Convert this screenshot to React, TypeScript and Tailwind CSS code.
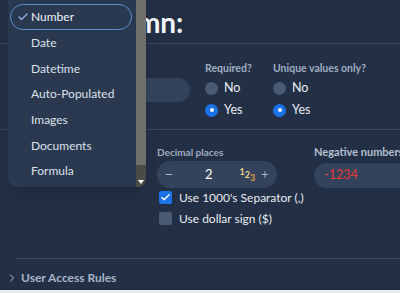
import { Check, ChevronRight, Minus, Plus } from 'lucide-react';

const types = ['Number', 'Date', 'Datetime', 'Auto-Populated', 'Images', 'Documents', 'Formula'];

function Radio({ checked, label }: { checked?: boolean; label: string }) {
  return (
    <div className="flex items-center gap-[6px] h-[22px]">
      {checked ? (
        <span className="w-[13px] h-[13px] rounded-full bg-[#1a73e8] flex items-center justify-center">
          <span className="w-[4px] h-[4px] rounded-full bg-white" />
        </span>
      ) : (
        <span className="w-[13px] h-[13px] rounded-full bg-[#4a5a72]" />
      )}
      <span className="text-[12.5px] text-[#e8edf3]">{label}</span>
    </div>
  );
}

function Checkbox({ checked, label }: { checked?: boolean; label: string }) {
  return (
    <div className="flex items-center gap-[7px] h-[21px]">
      {checked ? (
        <span className="w-[13px] h-[13px] rounded-[2px] bg-[#1a73e8] flex items-center justify-center">
          <Check size={11} strokeWidth={3} className="text-white" />
        </span>
      ) : (
        <span className="w-[13px] h-[13px] rounded-[2px] bg-[#4a5a72]" />
      )}
      <span className="text-[12px] text-[#e8edf3]">{label}</span>
    </div>
  );
}

export default function App() {
  return (
    <div
      className="relative w-[400px] h-[293px] overflow-hidden bg-[#232f45] text-white"
      style={{ fontFamily: 'Lato, "Noto Sans", sans-serif' }}
    >
      <div className="flex flex-col h-[290px]">
        {/* Heading */}
        <div className="h-[44px] flex items-center pl-[24px] border-b border-[#37465d]">
          <h1 className="text-[28px] font-bold leading-none text-[#f3f6fa]">Edit Column:</h1>
        </div>

        {/* Name + flags */}
        <div className="h-[86px] flex items-start pt-[17px] pl-[16px] border-b border-[#37465d]">
          <div className="w-[174px] pt-[17px]">
            <div className="h-[24px] rounded-full bg-[#33435b]" />
          </div>
          <div className="ml-[15px] w-[68px]">
            <div className="text-[10.5px] font-bold text-[#9fadc0] h-[14px] leading-[14px]">Required?</div>
            <div className="mt-[2px]">
              <Radio label="No" />
              <Radio checked label="Yes" />
            </div>
          </div>
          <div>
            <div className="text-[10.5px] font-bold text-[#9fadc0] h-[14px] leading-[14px]">Unique values only?</div>
            <div className="mt-[2px]">
              <Radio label="No" />
              <Radio checked label="Yes" />
            </div>
          </div>
        </div>

        {/* Number options */}
        <div className="flex-1 pl-[157px] pt-[15px]">
          <div className="flex gap-[37px]">
            <div>
              <div className="text-[10px] font-bold text-[#9fadc0] h-[14px] leading-[14px]">Decimal places</div>
              <div className="mt-[2px] w-[120px] h-[27px] rounded-full bg-[#33435b] flex items-center px-[7px] text-[#c4cdd9]">
                <Minus size={13} />
                <span className="ml-[31px] text-[13px] text-white">2</span>
                <span className="ml-[27px] text-[9px] font-bold leading-none flex items-end">
                  <span className="mb-[6px] text-[#efd28a]">1</span>
                  <span className="mb-[3px] text-[#efd28a]">2</span>
                  <span className="text-[#e09a3c]">3</span>
                </span>
                <Plus size={13} className="ml-[5px]" />
              </div>
            </div>
            <div>
              <div className="text-[11px] font-bold text-[#b4c0cf] h-[14px] leading-[14px] whitespace-nowrap">Negative numbers</div>
              <div className="mt-[4px] w-[110px] h-[25px] rounded-l-full bg-[#33435b] flex items-center pl-[10px]">
                <span className="text-[12.5px] text-[#e5393b]">-1234</span>
              </div>
            </div>
          </div>
          <div className="-mt-[1px] pl-[2px]">
            <Checkbox checked label="Use 1000's Separator (,)" />
            <Checkbox label="Use dollar sign ($)" />
          </div>
        </div>

        {/* Accordion */}
        <div className="ml-[16px] border-t border-[#37465d]" />
        <div className="h-[31px] flex items-center pl-[6px] gap-[3px] pt-[6px]">
          <ChevronRight size={12} className="text-[#b4c0cf]" />
          <span className="text-[12px] font-bold text-[#a8b5c6]">User Access Rules</span>
        </div>
      </div>
      <div className="h-[3px] bg-[#e9ecef]" />

      {/* Type dropdown menu */}
      <div className="absolute left-[8px] top-0 w-[138px] h-[187px] flex rounded-b-[8px] overflow-hidden bg-[#2a3850] shadow-lg">
        <ul className="flex-1 pt-[4px] pl-[2px] pr-[4px]">
          {types.map((t, i) => (
            <li
              key={t}
              className={
                i === 0
                  ? 'h-[26px] flex items-center gap-[2px] pl-[6px] rounded-full border-[1.5px] border-[#5f8fcb] text-[12px] text-[#eef2f7]'
                  : 'h-[25.7px] flex items-center pl-[21px] text-[12px] text-[#dbe2ea]'
              }
            >
              {i === 0 && <Check size={12} strokeWidth={2.5} className="text-[#8fb4e6]" />}
              {t}
            </li>
          ))}
        </ul>
        <div className="w-[10px] flex flex-col bg-[#4a4a46]">
          <div className="h-[165px] bg-[#6f6f6b]" />
          <div className="flex-1 flex items-end justify-center pb-[3px]">
            <span className="w-0 h-0 border-l-[3px] border-r-[3px] border-t-[4px] border-l-transparent border-r-transparent border-t-white" />
          </div>
        </div>
      </div>
    </div>
  );
}
